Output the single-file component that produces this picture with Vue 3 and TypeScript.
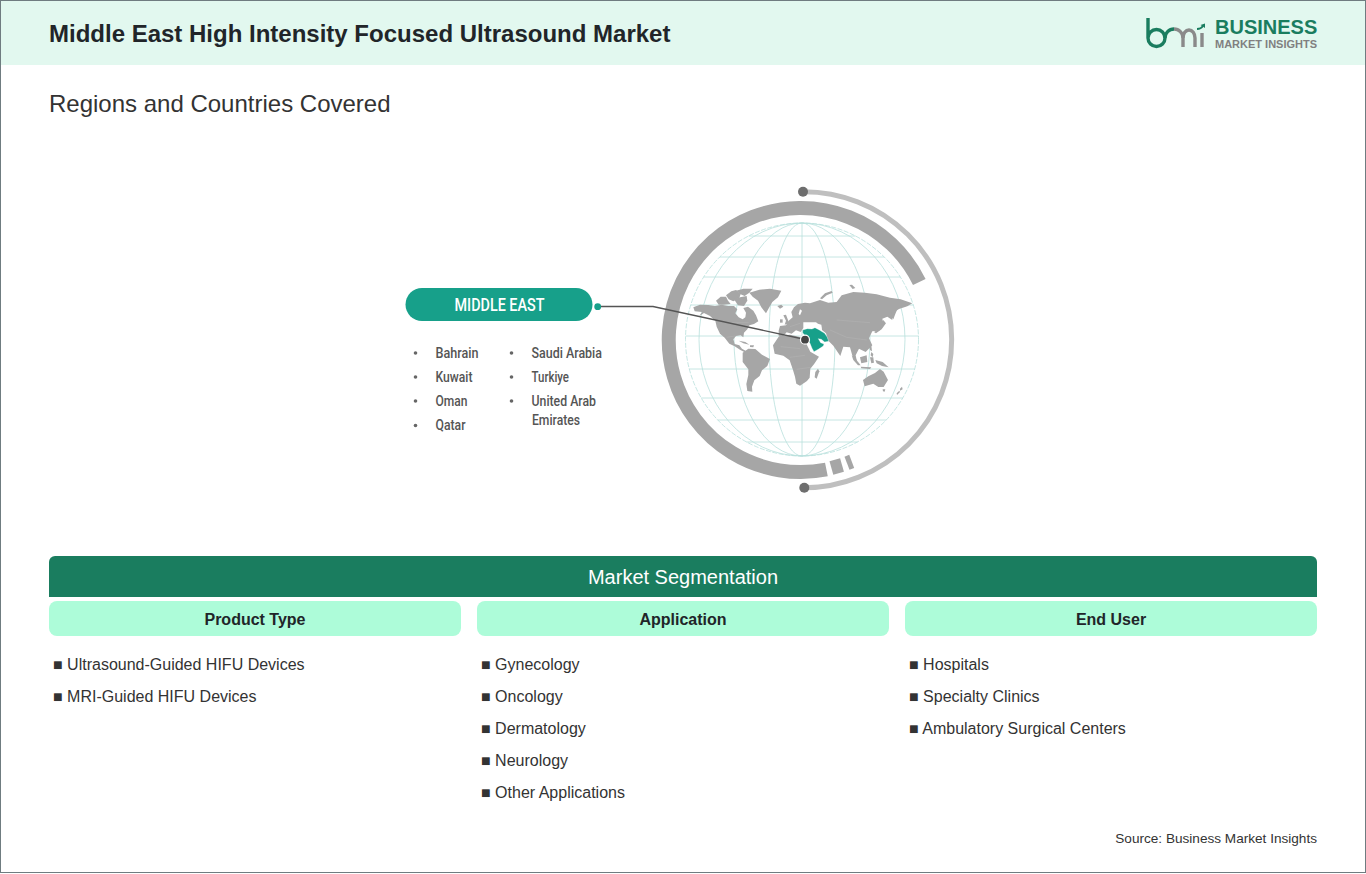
<script setup lang="ts">
// Regions slide: header, globe diagram, segmentation table
interface Country {
  label: string;
  x: number;
  y: number;
  w: number;
}

const cx = 802;
const cy = 339.5;
const r = 116.5;

const meridians = [33, 68, 103];
const parallels = [236, 257, 277, 305, 336, 369, 398, 420, 442].map((y) => {
  const half = Math.sqrt(r * r - (y - cy) * (y - cy));
  return { y, x1: cx - half, x2: cx + half };
});

const countries: Country[] = [
  { label: 'Bahrain', x: 435.5, y: 357.5, w: 43 },
  { label: 'Kuwait', x: 435.5, y: 381.5, w: 37 },
  { label: 'Oman', x: 435.5, y: 405.5, w: 32 },
  { label: 'Qatar', x: 435.5, y: 429.5, w: 30 },
  { label: 'Saudi Arabia', x: 531.5, y: 357.5, w: 70.5 },
  { label: 'Turkiye', x: 531.5, y: 381.5, w: 37.5 },
  { label: 'United Arab', x: 531.5, y: 405.5, w: 64.5 },
  { label: 'Emirates', x: 532, y: 424.5, w: 48 },
];
const bullets = [
  [415.5, 353],
  [415.5, 377],
  [415.5, 401],
  [415.5, 425.5],
  [511.5, 353],
  [511.5, 377],
  [511.5, 401],
];

const land = [
  // north america
  'M10,82 L30,74 L55,75 L75,78 L95,74 L115,78 L132,78 L142,88 L136,100 L146,112 L158,118 L166,112 L168,98 L160,84 L174,80 L190,92 L198,106 L205,124 L192,132 L178,136 L172,148 L162,158 L160,172 L152,166 L138,168 L130,178 L134,192 L148,196 L156,206 L168,213 L164,217 L150,209 L134,199 L118,191 L104,173 L90,161 L80,140 L76,122 L60,108 L42,99 L28,108 L36,96 L14,94 Z',
  // arctic islands
  'M78,62 L92,50 L108,50 L114,62 L122,72 L100,74 L86,74 Z',
  'M108,46 L124,34 L138,30 L152,42 L148,54 L130,64 L116,58 Z',
  'M132,58 L150,52 L170,48 L172,62 L162,78 L144,76 Z',
  'M138,32 L160,26 L188,26 L178,38 L164,48 L150,42 Z',
  // greenland
  'M178,38 L208,29 L240,26 L274,32 L264,52 L247,66 L238,82 L228,100 L214,82 L204,62 L188,50 Z',
  // cuba, hispaniola
  'M146,182 L166,186 L178,194 L160,190 Z',
  'M180,196 L192,196 L190,202 L180,201 Z',
  // south america
  'M158,218 L175,206 L196,207 L216,224 L240,237 L232,258 L216,271 L209,288 L193,301 L186,320 L187,335 L172,333 L169,312 L175,285 L175,268 L158,246 Z',
  // iceland, uk, ireland
  'M262,78 L274,74 L280,80 L270,86 Z',
  'M280,106 L288,104 L294,120 L298,130 L284,134 L288,122 Z',
  'M270,118 L278,118 L278,128 L270,128 Z',
  // eurasia
  'M266,152 L270,138 L288,136 L296,122 L308,112 L304,96 L312,82 L324,72 L345,68 L360,70 L390,60 L415,68 L440,66 L455,46 L490,36 L525,38 L560,43 L600,53 L632,58 L667,70 L652,79 L627,87 L607,100 L607,120 L592,110 L577,116 L582,136 L567,152 L547,154 L537,175 L547,196 L527,216 L507,206 L497,226 L502,250 L488,230 L480,202 L460,200 L451,228 L430,197 L415,182 L408,160 L396,150 L394,134 L384,131 L378,127 L340,127 L340,144 L332,156 L318,151 L305,161 L290,157 L278,170 L266,167 Z',
  // novaya zemlya, severnaya
  'M390,55 L405,40 L425,33 L428,38 L410,46 L396,58 Z',
  'M478,15 L486,14 L496,24 L488,27 Z',
  // sakhalin, japan
  'M606,98 L622,88 L616,102 L610,118 L604,112 Z',
  'M580,120 L588,130 L575,148 L558,160 L552,156 L568,146 Z',
  // africa
  'M249,196 L267,169 L300,164 L330,171 L346,185 L361,215 L387,230 L373,251 L361,266 L359,293 L351,303 L330,317 L319,311 L315,290 L309,270 L299,241 L280,227 L254,221 Z',
  // madagascar
  'M384,266 L388,274 L380,296 L374,292 L376,276 Z',
  // indonesia, philippines
  'M485,226 L498,238 L512,256 L504,256 L490,240 Z',
  'M512,260 L544,262 L540,267 L514,265 Z',
  'M510,232 L530,226 L532,246 L514,250 Z',
  'M540,232 L550,232 L552,248 L544,250 Z',
  'M536,190 L544,196 L546,214 L540,210 Z',
  'M544,216 L550,222 L548,232 L542,226 Z',
  'M556,240 L578,246 L596,262 L576,258 L560,250 Z',
  // australia
  'M519,300 L535,289 L555,279 L570,267 L581,275 L594,300 L581,321 L565,321 L550,311 L524,319 Z',
  'M578,328 L586,328 L584,335 L579,334 Z',
  // new zealand
  'M636,320 L638,328 L630,332 L630,326 Z',
  'M628,332 L630,336 L621,345 L620,340 Z',
];
// seas cut out of the land
const holes = [
  'M330,88 L336,92 L330,106 L326,102 Z',
  'M386,136 L393,136 L395,150 L388,148 Z',
];
// faint borders over the land
const borders =
  'M100,128 L176,128 M110,172 L136,168 M272,200 L330,206 M300,232 L345,226 M320,268 L362,262 M440,120 L540,128 M420,150 L470,172 M300,140 L330,130 M470,172 L530,180';
const middleEast =
  'M338,150 L352,146 L366,147 L375,143 L388,150 L404,160 L412,172 L416,184 L404,186 L394,178 L385,176 L392,188 L402,192 L400,198 L385,208 L372,215 L366,205 L360,190 L350,175 L343,165 L338,158 Z';

const columns = [
  { title: 'Product Type', items: ['Ultrasound-Guided HIFU Devices', 'MRI-Guided HIFU Devices'] },
  { title: 'Application', items: ['Gynecology', 'Oncology', 'Dermatology', 'Neurology', 'Other Applications'] },
  { title: 'End User', items: ['Hospitals', 'Specialty Clinics', 'Ambulatory Surgical Centers'] },
];
</script>

<template>
  <div class="frame">
    <header class="top">
      <h1>Middle East High Intensity Focused Ultrasound Market</h1>
      <div class="logo">
        <svg class="logo-mark" viewBox="1144 14 64 36" fill="none" stroke-width="3.400">
          <path d="M1148 18V38A8.500 8.500 0 0 0 1165 38A8.500 8.500 0 0 0 1148 38" stroke="#1a7d5f" />
          <path d="M1165 38A9 9 0 0 1 1174 29" stroke="#1a7d5f" />
          <path d="M1174 29A9 9 0 0 1 1183 38V47" stroke="#8a8a8a" />
          <path d="M1183 38A6 8 0 0 1 1195 38V47" stroke="#8a8a8a" />
          <path d="M1202 33V47" stroke="#8a8a8a" />
          <path d="M1197 29Q1201 29 1203 26" stroke="#1a7d5f" stroke-width="1.800" />
          <path d="M1200.500 25L1205 23.500L1205 28Z" fill="#1a7d5f" />
        </svg>
        <div class="logo-text">
          <span class="logo-big">BUSINESS</span>
          <span class="logo-small">MARKET INSIGHTS</span>
        </div>
      </div>
    </header>

    <main class="content">
      <h2>Regions and Countries Covered</h2>

      <svg class="diagram" viewBox="393 170 580 330" aria-label="Middle East on a world globe">
        <!-- globe lines -->
        <g fill="none" stroke="#b7dfdc" stroke-width="0.8">
          <circle :cx="cx" :cy="cy" :r="r" stroke-dasharray="5 1.500" />
          <ellipse v-for="m in meridians" :key="m" :cx="cx" :cy="cy" :rx="m" :ry="r" />
          <line :x1="cx" :y1="cy - r" :x2="cx" :y2="cy + r" />
          <line v-for="p in parallels" :key="p.y" :x1="p.x1" :y1="p.y" :x2="p.x2" :y2="p.y" />
        </g>

        <!-- rings -->
        <g fill="none">
          <path d="M919.300 282A132 132 0 1 0 826.400 469.500" stroke="#a6a6a6" stroke-width="14" />
          <path d="M831.400 468L842 465" stroke="#a6a6a6" stroke-width="14" />
          <path d="M847 463.200L851.700 461.400" stroke="#a6a6a6" stroke-width="14" />
          <path d="M803 191.700A148 148 0 0 1 804.300 487.700" stroke="#bfbfbf" stroke-width="5" />
        </g>
        <circle cx="803" cy="191.700" r="5" fill="#6e6e6e" />
        <circle cx="804.300" cy="487.700" r="5" fill="#6e6e6e" />

        <!-- map, traced in 3x crop coordinates -->
        <g transform="translate(690 280) scale(0.3333)">
          <path v-for="(d, i) in land" :key="i" :d="d" fill="#a6a6a6" />
          <path v-for="(d, i) in holes" :key="'h' + i" :d="d" fill="#fff" />
          <path :d="borders" fill="none" stroke="#bdbdbd" stroke-width="1" />
          <path :d="middleEast" fill="#17a08a" stroke="#fff" stroke-width="1" />
        </g>

        <!-- leader -->
        <path d="M600 306.500H653L803 339" fill="none" stroke="#555" stroke-width="1.400" />
        <circle cx="597.700" cy="306.700" r="3.400" fill="#17a08a" />
        <circle cx="805" cy="339.700" r="4.500" fill="#444" stroke="#fff" stroke-width="1.200" />

        <!-- region pill -->
        <rect x="405.500" y="288" width="187" height="33" rx="16.500" fill="#17a08a" />
        <text class="pill-label" x="454.500" y="311" textLength="90" lengthAdjust="spacingAndGlyphs">MIDDLE EAST</text>
        <circle v-for="b in bullets" :key="b[1] + '-' + b[0]" :cx="b[0]" :cy="b[1]" r="1.800" fill="#666" />
        <text
          v-for="c in countries"
          :key="c.label"
          class="country"
          :x="c.x"
          :y="c.y"
          :textLength="c.w"
          lengthAdjust="spacingAndGlyphs"
        >{{ c.label }}</text>
      </svg>

      <section class="segments">
        <div class="seg-title">Market Segmentation</div>
        <div class="seg-grid">
          <div v-for="col in columns" :key="col.title" class="seg-col">
            <div class="seg-head">{{ col.title }}</div>
            <ul>
              <li v-for="item in col.items" :key="item">■ {{ item }}</li>
            </ul>
          </div>
        </div>
      </section>

      <p class="source">Source: Business Market Insights</p>
    </main>
  </div>
</template>

<style>
html,
body {
  margin: 0;
  background: #fff;
}
</style>

<style scoped>
.frame {
  width: 1366px;
  height: 873px;
  box-sizing: border-box;
  border: 1px solid #6f7c80;
  font-family: "Liberation Sans", Arial, sans-serif;
  color: #333;
  background: #fff;
  overflow: hidden;
}
.top {
  height: 64px;
  padding: 0 48px;
  background: #e2f8ef;
  display: flex;
  align-items: center;
  justify-content: space-between;
}
h1 {
  margin: 2px 0 0;
  font-size: 24px;
  line-height: 28px;
  font-weight: 700;
  color: #212529;
}
.logo {
  display: flex;
  align-items: center;
  gap: 7px;
}
.logo-mark {
  width: 64px;
  height: 36px;
  margin-bottom: 2px;
}
.logo-text {
  display: flex;
  flex-direction: column;
  width: 102px;
}
.logo-big {
  font-size: 20px;
  line-height: 22px;
  font-weight: 700;
  color: #1a7d5f;
  white-space: nowrap;
}
.logo-small {
  font-size: 11px;
  line-height: 12px;
  font-weight: 700;
  color: #808080;
  white-space: nowrap;
}
.content {
  padding: 0 48px;
}
h2 {
  margin: 26px 0 0;
  font-size: 24px;
  line-height: 26px;
  font-weight: 400;
  color: #333;
}
.diagram {
  display: block;
  width: 580px;
  height: 330px;
  margin: 53px auto 0;
}
.pill-label {
  font-family: Roboto, sans-serif;
  font-size: 18px;
  font-weight: 500;
  fill: #fff;
}
.country {
  font-family: Roboto, sans-serif;
  font-size: 14px;
  font-weight: 500;
  fill: #555;
}
.segments {
  margin-top: 56px;
}
.seg-title {
  height: 41px;
  line-height: 43px;
  background: #1a7d5f;
  color: #fff;
  font-size: 20px;
  text-align: center;
  border-radius: 6px 6px 0 0;
}
.seg-grid {
  display: grid;
  grid-template-columns: repeat(3, 1fr);
  gap: 16px;
  margin-top: 4px;
}
.seg-head {
  height: 35px;
  line-height: 37px;
  background: #adfcd9;
  border-radius: 8px;
  text-align: center;
  font-size: 16px;
  font-weight: 700;
  color: #212529;
}
ul {
  list-style: none;
  margin: 13px 0 0;
  padding: 0 0 0 4px;
}
li {
  font-size: 16px;
  line-height: 32px;
  color: #333;
}
.source {
  margin: 20px 0 0;
  font-size: 13.600px;
  line-height: 20px;
  text-align: right;
  color: #333;
}
</style>
